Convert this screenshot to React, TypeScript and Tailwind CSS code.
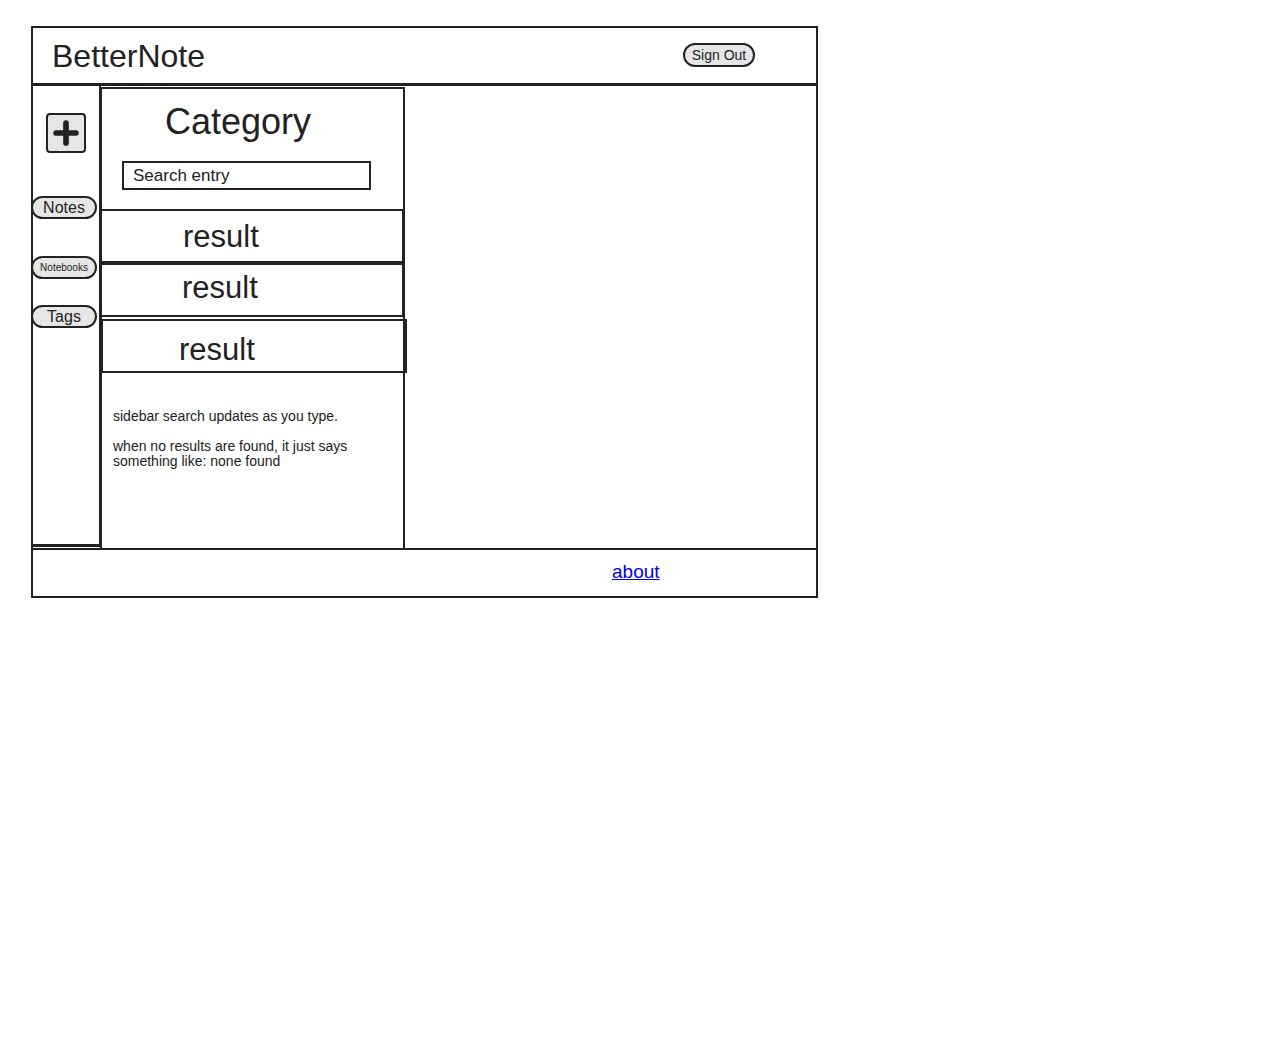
import { Plus } from 'lucide-react'

function Pill({ label, small }: { label: string; small?: boolean }) {
  return (
    <button
      className={`-ml-[2px] w-[66px] h-[23px] rounded-full border-2 border-[#222] bg-[#e6e6e6] text-[#222] leading-none flex items-center justify-center ${small ? 'text-[10px]' : 'text-[16px]'}`}>
      {label}
    </button>
  )
}

function Result({ className }: { className: string }) {
  return (
    <div className={`h-[54px] border-2 border-[#222] text-[31px] text-[#222] leading-none flex items-center ${className}`}>
      result
    </div>
  )
}

export default function App() {
  return (
    <div className="pt-[26px] pl-[31px] w-[818px] font-['Liberation_Sans',Arial,sans-serif] text-[#222]">
      {/* Header */}
      <div className="h-[57px] border-2 border-b-0 border-[#222] flex items-center">
        <span className="ml-[19px] text-[32px] leading-none">BetterNote</span>
        <button className="ml-[478px] mt-[-1px] w-[72px] h-[24px] rounded-full border-2 border-[#222] bg-[#e6e6e6] text-[14px] leading-none">
          Sign Out
        </button>
      </div>

      {/* Main */}
      <div className="flex h-[465px] border-2 border-t-[3px] border-b-0 border-[#222]">
        {/* Nav */}
        <div className="w-[68px] shrink-0 border-r-2 border-b-[3px] border-[#222] h-[461px] flex flex-col">
          <button className="mt-[27px] ml-[13px] w-[40px] h-[40px] rounded-[4px] border-2 border-[#222] bg-[#e6e6e6] flex items-center justify-center">
            <Plus size={34} strokeWidth={4} strokeLinecap="round" className="text-[#222]" />
          </button>
          <div className="mt-[43px]"><Pill label="Notes" /></div>
          <div className="mt-[37px]"><Pill label="Notebooks" small /></div>
          <div className="mt-[26px]"><Pill label="Tags" /></div>
        </div>

        {/* Category column */}
        <div className="w-[305px] shrink-0 -ml-[1px] mt-[1px] border-2 border-b-0 border-[#222] flex flex-col">
          <div className="pt-[15px] pl-[63px] text-[36px] leading-none">Category</div>
          <div className="mt-[21px] ml-[20px] w-[249px] h-[29px] border-2 border-[#222] flex items-center pl-[9px] text-[17px] leading-none">
            Search entry
          </div>
          <Result className="mt-[19px] -ml-[3px] w-[305px] pl-[82px]" />
          <Result className="-ml-[3px] w-[305px] pl-[81px] pb-[5px]" />
          <Result className="mt-[2px] -ml-[1px] w-[306px] pl-[76px] pt-[6px]" />
          <div className="mt-[36px] pl-[11px] text-[14px] leading-[15px]">
            <p>sidebar search updates as you type.</p>
            <p className="mt-[15px]">when no results are found, it just says<br />something like: none found</p>
          </div>
        </div>

        <div className="flex-1" />
      </div>

      {/* Footer */}
      <div className="h-[50px] border-2 border-[#222] flex items-center">
        <a href="#" className="ml-[579px] -mt-[3px] text-[19px] leading-none text-[#0000ee] underline">about</a>
      </div>
    </div>
  )
}
